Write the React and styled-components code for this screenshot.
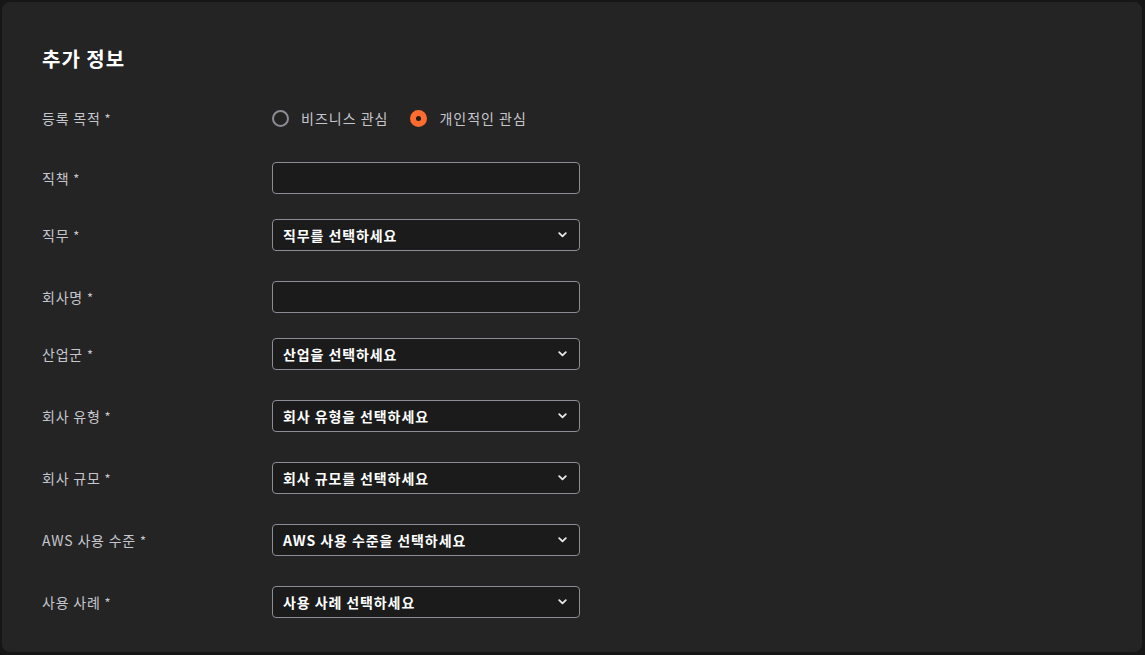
import { useState } from "react";
import styled, { createGlobalStyle } from "styled-components";

const GlobalStyle = createGlobalStyle`
  html, body {
    margin: 0;
    padding: 0;
    background: #161616;
  }
  body {
    font-family: "Noto Sans CJK KR", "Noto Sans", sans-serif;
  }
`;

const FIELDS = [
  { label: "직책", type: "text", gap: 28 },
  { label: "직무", type: "select", placeholder: "직무를 선택하세요", gap: 25 },
  { label: "회사명", type: "text", gap: 30 },
  { label: "산업군", type: "select", placeholder: "산업을 선택하세요", gap: 25 },
  { label: "회사 유형", type: "select", placeholder: "회사 유형을 선택하세요", gap: 30 },
  { label: "회사 규모", type: "select", placeholder: "회사 규모를 선택하세요", gap: 30 },
  { label: "AWS 사용 수준", type: "select", placeholder: "AWS 사용 수준을 선택하세요", gap: 30 },
  { label: "사용 사례", type: "select", placeholder: "사용 사례 선택하세요", gap: 30 },
];

export default function App() {
  const [purpose, setPurpose] = useState("personal");

  return (
    <>
      <GlobalStyle />
      <Page>
        <Card>
          <Title>추가 정보</Title>
          <Row gap={29}>
            <Label>
              등록 목적 <Star>*</Star>
            </Label>
            <RadioGroup>
              <RadioOption onClick={() => setPurpose("business")}>
                <Radio checked={purpose === "business"} />
                비즈니스 관심
              </RadioOption>
              <RadioOption onClick={() => setPurpose("personal")}>
                <Radio checked={purpose === "personal"} />
                개인적인 관심
              </RadioOption>
            </RadioGroup>
          </Row>

          {FIELDS.map((f) => (
            <Row key={f.label} gap={f.gap}>
              <Label>
                {f.label} <Star>*</Star>
              </Label>
              {f.type === "text" ? (
                <TextInput type="text" />
              ) : (
                <Select>
                  <span>{f.placeholder}</span>
                  <svg width="9" height="6" viewBox="0 0 9 6">
                    <path
                      d="M1.2 1.2 L4.5 4.4 L7.8 1.2"
                      fill="none"
                      stroke="#e8e8ec"
                      strokeWidth="1.8"
                      strokeLinecap="round"
                      strokeLinejoin="round"
                    />
                  </svg>
                </Select>
              )}
            </Row>
          ))}
        </Card>
      </Page>
    </>
  );
}

const Page = styled.div`
  padding: 2px 3px 3px 2px;
  width: 1145px;
  height: 655px;
  box-sizing: border-box;
`;

const Card = styled.div`
  background: #242424;
  border-radius: 8px;
  height: 100%;
  box-sizing: border-box;
  padding: 43px 40px 0;
`;

const Title = styled.h2`
  margin: 0;
  font-size: 20px;
  font-weight: 700;
  color: #ffffff;
  line-height: 28px;
  letter-spacing: 1px;
`;

const Row = styled.div`
  display: flex;
  align-items: center;
  height: 32px;
  margin-top: ${(p) => p.gap}px;
`;

const Label = styled.div`
  width: 230px;
  font-size: 14px;
  letter-spacing: 0.8px;
  color: #c6c6cd;
`;

const Star = styled.span`
  color: #c6c6cd;
  font-size: 13px;
`;

const RadioGroup = styled.div`
  display: flex;
  align-items: center;
  gap: 22px;
`;

const RadioOption = styled.label`
  display: flex;
  align-items: center;
  gap: 12px;
  font-size: 14px;
  letter-spacing: 1px;
  color: #c6c6cd;
  cursor: pointer;
`;

const Radio = styled.span`
  width: 17px;
  height: 17px;
  box-sizing: border-box;
  border-radius: 50%;
  border: ${(p) => (p.checked ? "6px solid #ff6c2f" : "2px solid #8c8c94")};
  background: ${(p) => (p.checked ? "#1b1b1b" : "transparent")};
`;

const TextInput = styled.input`
  width: 308px;
  height: 32px;
  box-sizing: border-box;
  background: #1b1b1b;
  border: 1px solid #8c8c94;
  border-radius: 4px;
  outline: none;
  color: #fff;
  font-family: inherit;
  font-size: 14px;
  padding: 0 10px;
`;

const Select = styled.div`
  width: 308px;
  height: 32px;
  box-sizing: border-box;
  background: #1b1b1b;
  border: 1px solid #8c8c94;
  border-radius: 4px;
  display: flex;
  align-items: center;
  justify-content: space-between;
  padding: 0 12px 0 10px;
  font-size: 14px;
  font-weight: 700;
  letter-spacing: 0.9px;
  color: #ffffff;
  cursor: pointer;
`;
